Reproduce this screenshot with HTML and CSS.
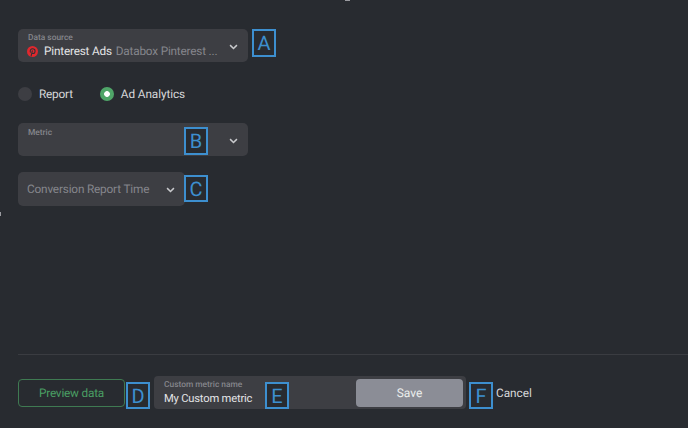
FILE: index.html
```html
<!DOCTYPE html>
<html lang="en">
<head>
<meta charset="utf-8">
<title>Custom metric</title>
<link rel="stylesheet" href="styles.css">
</head>
<body>
<span class="speck speck-top"></span>
<span class="speck speck-left"></span>
<main class="page">
  <section class="form">
    <div class="field field-source">
      <span class="field-label">Data source</span>
      <div class="source-value">
        <svg class="pin" viewBox="0 0 24 24" aria-hidden="true">
          <circle cx="12" cy="12" r="12" fill="#e0282e"/>
          <path d="M9 22l2.6-11.5M7.4 13.4C5.8 9.4 8.500 5.800 12.300 5.800c3.400 0 5.300 2.300 5.300 5 0 3.300-1.800 5.700-4.200 5.700-1.200 0-2.100-.8-2.300-1.800" fill="none" stroke="#2f3136" stroke-width="2.300" stroke-linecap="round"/>
        </svg>
        <span class="source-name">Pinterest Ads</span>
        <span class="source-account">Databox Pinterest ...</span>
      </div>
      <svg class="chevron" viewBox="0 0 10 7" aria-hidden="true"><path d="M1 1.300l4 4 4-4"/></svg>
      <span class="badge badge-a">A</span>
    </div>

    <div class="radios">
      <label class="radio"><span class="dot"></span>Report</label>
      <label class="radio radio-wide"><span class="dot dot-on"></span>Ad Analytics</label>
    </div>

    <div class="field field-metric">
      <span class="field-label">Metric</span>
      <svg class="chevron" viewBox="0 0 10 7" aria-hidden="true"><path d="M1 1.300l4 4 4-4"/></svg>
      <span class="badge badge-b">B</span>
    </div>

    <div class="select">
      <span class="select-text">Conversion Report Time</span>
      <svg class="chevron" viewBox="0 0 10 7" aria-hidden="true"><path d="M1 1.300l4 4 4-4"/></svg>
      <span class="badge badge-c">C</span>
    </div>
  </section>

  <footer class="footer">
    <button class="preview" type="button">Preview data</button>
    <span class="badge badge-d">D</span>
    <div class="name-box">
      <div class="name-field">
        <span class="field-label">Custom metric name</span>
        <span class="name-value">My Custom metric</span>
      </div>
      <span class="badge badge-e">E</span>
      <button class="save" type="button">Save</button>
    </div>
    <span class="badge badge-f">F</span>
    <button class="cancel" type="button">Cancel</button>
  </footer>
</main>
</body>
</html>
```
FILE: styles.css
```css
* { box-sizing: border-box; }
html, body { margin: 0; height: 100%; }
body {
  background: #282b30;
  color: #e3e4e6;
  font-family: Roboto, "Liberation Sans", sans-serif;
  text-rendering: geometricPrecision;
  overflow: hidden;
  position: relative;
}
.page {
  height: 428px;
  padding: 29px 0 19px 18px;
  display: flex;
  flex-direction: column;
}
.form { flex: 1; display: flex; flex-direction: column; align-items: flex-start; }

.field, .select {
  position: relative;
  background: #3d3e43;
  border-radius: 5px;
}
.field { width: 230px; height: 33px; padding: 4px 10px; }
.field-label {
  display: block;
  font-size: 8.400px;
  line-height: 11px;
  font-weight: 500;
  color: #85868c;
}
.source-value { display: flex; align-items: center; height: 16px; margin: -1px 0 0 -1px; }
.pin { width: 11px; height: 11px; margin-right: 6px; flex: none; }
.source-name { font-size: 11.800px; letter-spacing: -.2px; color: #e3e4e6; white-space: nowrap; }
.source-account { font-size: 11.800px; letter-spacing: -.2px; color: #85868c; margin-left: 4px; white-space: nowrap; }

.chevron {
  position: absolute;
  right: 10px;
  top: 15px;
  width: 9px;
  height: 6px;
  fill: none;
  stroke: #c9cacd;
  stroke-width: 1.700;
}
.radios { display: flex; gap: 27px; margin-top: 24px; height: 15px; }
.radio { display: flex; align-items: center; gap: 7px; font-size: 11.800px; letter-spacing: -.2px; color: #d6d7d9; }
.radio-wide { letter-spacing: -.1px; }
.dot { width: 14px; height: 14px; border-radius: 50%; background: #3d3e43; flex: none; }
.dot-on { background: radial-gradient(circle, #fff 0 2.500px, #4fa568 3.200px); }

.field-metric { margin-top: 22px; }
.field-metric .field-label { margin-top: 1px; }

.select {
  width: 167px;
  height: 34px;
  margin-top: 16px;
  padding-left: 9px;
  display: flex;
  align-items: center;
}
.select-text { font-size: 11.800px; letter-spacing: -.18px; color: #85868c; white-space: nowrap; }

.badge {
  position: absolute;
  width: 24px;
  height: 28px;
  border: 2px solid #3d8fcf;
  color: #3d8fcf;
  background: #282b30;
  font-size: 20px;
  line-height: 24px;
  text-align: center;
  font-weight: 400;
}
.badge-a { left: 234px; top: 0; }
.badge-b { left: 166px; top: 4px; }
.badge-c { left: 166px; top: 3px; height: 27px; }
.badge-d { left: 126px; top: 382px; height: 27px; }
.badge-e { left: 111px; top: 6px; height: 27px; }
.badge-f { left: 469px; top: 382px; height: 27px; }

.footer {
  display: flex;
  align-items: center;
  border-top: 1px solid #3a3c41;
  padding-top: 21px;
  height: 55px;
}
.preview {
  width: 107px;
  height: 28px;
  background: transparent;
  border: 1px solid #3f7a52;
  border-radius: 4px;
  color: #4a9e63;
  font: 400 11.800px Roboto, "Liberation Sans", sans-serif;
  letter-spacing: -.2px;
  padding: 0;
  text-rendering: geometricPrecision;
}
.name-box {
  position: relative;
  width: 312px;
  height: 33px;
  margin-left: 29px;
  background: #3d3e43;
  border-radius: 4px;
  display: flex;
  align-items: center;
  justify-content: space-between;
  padding: 0 3px 0 10px;
}
.name-field { display: flex; flex-direction: column; padding-top: 1px; }
.name-value { font-size: 11.200px; letter-spacing: -.2px; line-height: 15px; color: #e3e4e6; }
.save {
  width: 107px;
  height: 28px;
  background: #8b8d96;
  border: 0;
  border-radius: 4px;
  color: #eceded;
  font: 400 12px Roboto, "Liberation Sans", sans-serif;
  padding: 0;
  text-rendering: geometricPrecision;
}
.cancel {
  margin-left: 30px;
  background: none;
  border: 0;
  padding: 0;
  color: #d6d7d9;
  font: 400 11.800px Roboto, "Liberation Sans", sans-serif;
  text-rendering: geometricPrecision;
}
.speck { position: absolute; background: #9a9ba0; }
.speck-top { left: 345px; top: 0; width: 5px; height: 1px; }
.speck-left { left: 0; top: 212px; width: 1px; height: 4px; }
```
